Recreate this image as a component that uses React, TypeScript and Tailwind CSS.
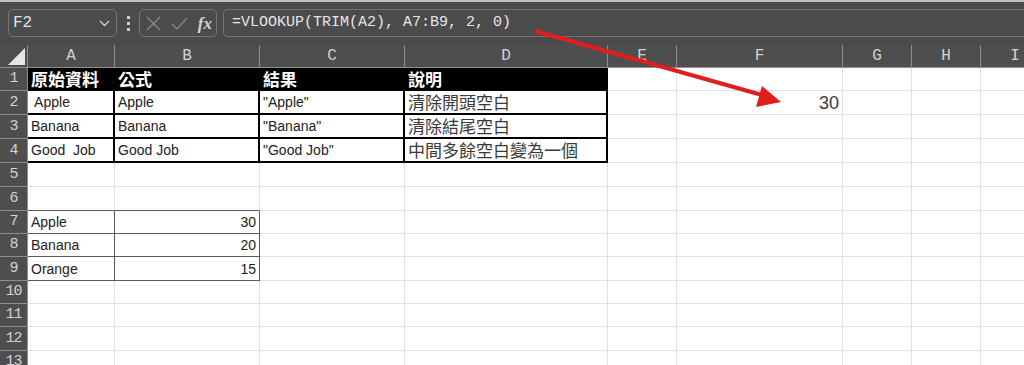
import React from "react";

const sans = "font-['Liberation_Sans',Arial,sans-serif]";
const cjk = "font-['Noto_Sans_CJK_TC','Noto_Sans',sans-serif]";
const mono = "font-['Liberation_Mono','Noto_Sans_CJK_TC',monospace]";

// column letters and widths (written out so Tailwind picks them up)
const COLS = [
  { key: "A", w: "w-[87px]" },
  { key: "B", w: "w-[145px]" },
  { key: "C", w: "w-[145px]" },
  { key: "D", w: "w-[203px]" },
  { key: "E", w: "w-[69px]" },
  { key: "F", w: "w-[166px]" },
  { key: "G", w: "w-[69px]" },
  { key: "H", w: "w-[69px]" },
  { key: "I", w: "w-[69px]" },
];

const ROW_H = [
  "h-[23px]",
  "h-[24px]",
  "h-[24px]",
  "h-[24px]",
  "h-[24px]",
  "h-[24px]",
  "h-[23px]",
  "h-[23px]",
  "h-[24px]",
  "h-[23px]",
  "h-[23px]",
  "h-[24px]",
  "h-[23px]",
];

type Cell = { text: string; kind?: "head" | "cjk" | "num" | "big" };

const DATA: Record<string, Cell> = {
  A1: { text: "原始資料", kind: "head" },
  B1: { text: "公式", kind: "head" },
  C1: { text: "結果", kind: "head" },
  D1: { text: "說明", kind: "head" },
  A2: { text: " Apple" },
  B2: { text: "Apple" },
  C2: { text: '"Apple"' },
  D2: { text: "清除開頭空白", kind: "cjk" },
  F2: { text: "30", kind: "big" },
  A3: { text: "Banana" },
  B3: { text: "Banana" },
  C3: { text: '"Banana"' },
  D3: { text: "清除結尾空白", kind: "cjk" },
  A4: { text: "Good  Job" },
  B4: { text: "Good Job" },
  C4: { text: '"Good Job"' },
  D4: { text: "中間多餘空白變為一個", kind: "cjk" },
  A7: { text: "Apple" },
  B7: { text: "30", kind: "num" },
  A8: { text: "Banana" },
  B8: { text: "20", kind: "num" },
  A9: { text: "Orange" },
  B9: { text: "15", kind: "num" },
};

function borderFor(col: string, row: number) {
  const inBlock = row >= 1 && row <= 4 && "ABCD".includes(col);
  if (inBlock) return "border-r-2 border-b-2 border-r-black border-b-black";
  const lookup = "AB".includes(col) && row >= 6 && row <= 9;
  if (lookup && row === 6)
    return "border-r border-b border-r-[#e1e1e1] border-b-[#5a5a5a]";
  if (lookup) return "border-r border-b border-r-[#5a5a5a] border-b-[#5a5a5a]";
  return "border-r border-b border-r-[#e1e1e1] border-b-[#e1e1e1]";
}

function textFor(cell?: Cell) {
  if (!cell) return "";
  switch (cell.kind) {
    case "head":
      return `${cjk} text-[17px] leading-[20px] font-bold text-white`;
    case "cjk":
      return `${cjk} text-[17px] leading-[20px] text-[#3a3a3a]`;
    case "num":
      return `${sans} text-[14px] leading-[18px] text-[#222] justify-end`;
    case "big":
      return `${sans} text-[18px] leading-[20px] text-[#3a3a3a] justify-end`;
    default:
      return `${sans} text-[14px] leading-[18px] text-[#222]`;
  }
}

function NameBox() {
  return (
    <div className="ml-[8px] w-[109px] h-[28px] rounded-[5px] border border-[#747474] flex items-center justify-between pl-[4px] pr-[6px]">
      <span className={`${mono} text-[16px] text-[#e2e2e2]`}>F2</span>
      <svg width="11" height="7" viewBox="0 0 11 7">
        <path d="M1 1l4.5 4.5L10 1" fill="none" stroke="#cfcfcf" strokeWidth="1.3" />
      </svg>
    </div>
  );
}

function FormulaButtons() {
  return (
    <div className="w-[78px] h-[28px] rounded-[5px] border border-[#747474] flex items-center pl-[6px] pr-[4px] justify-between">
      <svg width="15" height="15" viewBox="0 0 15 15">
        <path d="M1 1l13 13M14 1L1 14" stroke="#8c8c8c" strokeWidth="1.2" />
      </svg>
      <svg width="17" height="13" viewBox="0 0 17 13">
        <path d="M1 7l5 5L16 1" fill="none" stroke="#8c8c8c" strokeWidth="1.2" />
      </svg>
      <span className="font-['Liberation_Serif',serif] italic font-bold text-[17px] text-[#d4d4d4] leading-none">
        fx
      </span>
    </div>
  );
}

export default function App() {
  return (
    <div className="relative w-[1024px] h-[365px] overflow-hidden bg-white">
      {/* formula bar */}
      <div className="h-[45px] bg-[#4b4b4b]">
        <div className="h-[2px] bg-[#c2c2c2]" />
        <div className="flex items-start pt-[7px]">
          <NameBox />
          <div className="w-[22px] h-[28px] flex flex-col items-center justify-center gap-[3px]">
            <span className="w-[3px] h-[3px] bg-[#cfcfcf]" />
            <span className="w-[3px] h-[3px] bg-[#cfcfcf]" />
            <span className="w-[3px] h-[3px] bg-[#cfcfcf]" />
          </div>
          <FormulaButtons />
          <div className="ml-[6px] flex-1 h-[28px] rounded-l-[5px] border border-r-0 border-[#747474] flex items-center pl-[8px]">
            <span className={`${mono} text-[15px] text-[#e6e6e6] whitespace-pre`}>
              =VLOOKUP(TRIM(A2), A7:B9, 2, 0)
            </span>
          </div>
        </div>
      </div>

      {/* column headers */}
      <div className="flex h-[23px] bg-[#4e4e4e] border-b border-[#8e8e8e]">
        <div className="w-[28px] shrink-0 border-r border-[#8e8e8e] relative">
          <svg className="absolute left-0 top-0" width="28" height="22" viewBox="0 0 28 22">
            <polygon points="8,20 25,20 25,3" fill="#e6e6e6" />
          </svg>
        </div>
        {COLS.map((c) => (
          <div
            key={c.key}
            className={`${c.w} shrink-0 border-r border-[#8e8e8e] flex items-center justify-center ${mono} text-[16px] text-[#d2d2d2]`}
          >
            {c.key}
          </div>
        ))}
      </div>

      {/* rows */}
      {ROW_H.map((h, i) => {
        const row = i + 1;
        return (
          <div key={row} className={`flex ${h}`}>
            <div className="w-[28px] shrink-0 bg-[#4e4e4e] border-r border-b border-[#8e8e8e] flex items-center justify-center">
              <span className={`${mono} text-[15px] leading-[18px] text-[#d2d2d2] tracking-[-1px]`}>{row}</span>
            </div>
            {COLS.map((c) => {
              const cell = DATA[`${c.key}${row}`];
              const black = row === 1 && "ABCD".includes(c.key);
              return (
                <div
                  key={c.key}
                  className={`${c.w} shrink-0 h-full flex items-center px-[3px] overflow-hidden whitespace-pre ${borderFor(
                    c.key,
                    row
                  )} ${black ? "bg-black" : ""} ${textFor(cell)}`}
                >
                  {cell?.text}
                </div>
              );
            })}
          </div>
        );
      })}

      {/* red annotation arrow */}
      <svg
        className="absolute left-0 top-0 pointer-events-none"
        width="1024"
        height="365"
        viewBox="0 0 1024 365"
      >
        <line x1="535" y1="31" x2="762" y2="95" stroke="#e01e1e" strokeWidth="4" />
        <polygon points="781,102 762,86 756,107" fill="#e01e1e" />
      </svg>
    </div>
  );
}
